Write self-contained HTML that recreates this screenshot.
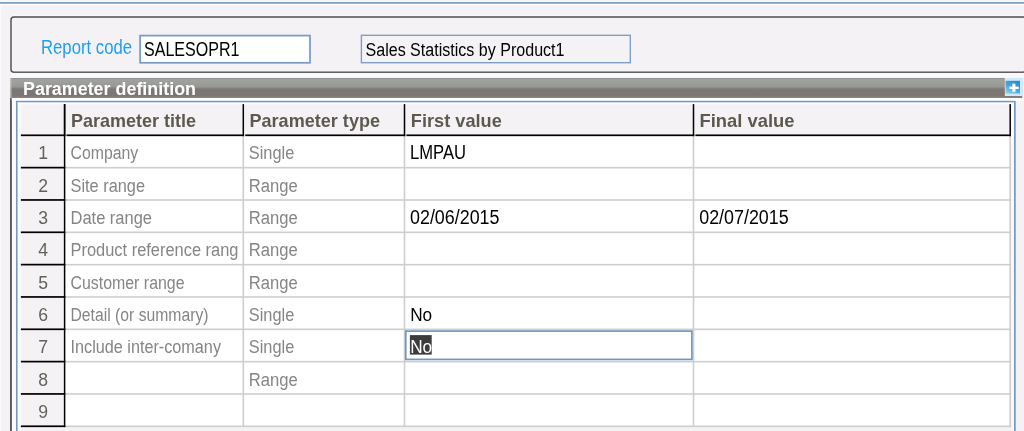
<!DOCTYPE html>
<html><head><meta charset="utf-8"><title>Parameter definition</title>
<style>
html,body{margin:0;padding:0;background:#f5f2f6;}
body{position:relative;width:1024px;height:431px;overflow:hidden;font-family:"Liberation Sans",sans-serif;}
svg{display:block;position:absolute;left:-4px;top:-4px;font-family:"Liberation Sans",sans-serif;will-change:transform;filter:blur(0.4px);}
</style></head><body>
<svg width="1032" height="439" viewBox="-4 -4 1032 439">
<rect x="-4" y="-4" width="1032" height="439" fill="#f5f2f6"/>
<rect x="-4" y="-4" width="1032" height="6" fill="#f8f6fa"/>
<rect x="-4" y="2" width="1032" height="1.9" fill="#82a3c6"/>
<rect x="-4" y="3.9" width="1032" height="1.3" fill="#ffffff"/>
<rect x="-4" y="4" width="5" height="431" fill="#fbfafc"/>
<rect x="11" y="17" width="1015" height="55.3" rx="3" ry="3" fill="none" stroke="#505050" stroke-width="1.45"/>
<rect x="13" y="14.6" width="1015" height="1.4" fill="#faf8fb"/>
<rect x="11" y="72.9" width="1013" height="4.6" fill="#f9f8fa"/>
<text x="41.0" y="54.1" font-size="19.4" fill="#1c9ff0" textLength="91" lengthAdjust="spacingAndGlyphs">Report code</text>
<rect x="140.1" y="35.6" width="169.9" height="27.2" fill="#ffffff" stroke="#7a9cc4" stroke-width="1.75"/>
<text x="144.0" y="56.1" font-size="19.7" fill="#000" textLength="95.5" lengthAdjust="spacingAndGlyphs">SALESOPR1</text>
<rect x="361.4" y="35.3" width="268.9" height="27.4" fill="#f5f2f6" stroke="#7a9cc4" stroke-width="1.35"/>
<text x="365.5" y="56.0" font-size="19.2" fill="#000" textLength="199" lengthAdjust="spacingAndGlyphs">Sales Statistics by Product1</text>
<defs>
<linearGradient id="bar" x1="0" y1="0" x2="0" y2="1">
<stop offset="0" stop-color="#8b8d8a"/>
<stop offset="0.08" stop-color="#a0a29e"/>
<stop offset="0.42" stop-color="#989995"/>
<stop offset="0.55" stop-color="#7d7876"/>
<stop offset="0.88" stop-color="#7b7573"/>
<stop offset="1" stop-color="#8c8886"/>
</linearGradient>
<linearGradient id="ico" x1="0.8" y1="0" x2="0.2" y2="1">
<stop offset="0" stop-color="#2a88cf"/>
<stop offset="0.55" stop-color="#4ba6dd"/>
<stop offset="1" stop-color="#8dcdec"/>
</linearGradient>
</defs>
<rect x="10.2" y="78" width="1012" height="20.1" fill="url(#bar)"/>
<rect x="10.2" y="78" width="1.3" height="20.1" fill="#c4c4c4" opacity="0.85"/>
<text x="23.0" y="94.5" font-size="18" fill="#ffffff" font-weight="bold" textLength="173" lengthAdjust="spacingAndGlyphs">Parameter definition</text>
<rect x="1004.8" y="78" width="18" height="18" fill="#d2eaf7"/>
<rect x="1005.6" y="80.8" width="14.4" height="12.8" fill="url(#ico)"/>
<rect x="1012.3" y="83.7" width="3.1" height="8.2" fill="#ffffff"/>
<rect x="1009.3" y="86.6" width="9.4" height="2.4" fill="#ffffff"/>
<rect x="11.8" y="98.1" width="1016" height="340" fill="#f5f2f6"/>
<rect x="11.8" y="98.1" width="5" height="340" fill="#faf9fb"/>
<rect x="10.0" y="98.1" width="1.9" height="340" fill="#585858"/>
<rect x="11.8" y="98.1" width="1016" height="2.8" fill="#ffffff"/>
<rect x="16.9" y="101.7" width="997.9" height="340" fill="#f5f2f6" stroke="#7199c3" stroke-width="1.8"/>
<rect x="17.7" y="102.5" width="3.1" height="330" fill="#fbfafc"/>
<rect x="17.7" y="102.5" width="996.3" height="1.8" fill="#fdfcfe"/>
<rect x="1011" y="104" width="3" height="335" fill="#fbfafc"/>
<rect x="65" y="136" width="945" height="290.27" fill="#ffffff"/>
<rect x="65.4" y="166.88" width="945.8" height="1.6" fill="#cfcdd0"/>
<rect x="65.4" y="199.21" width="945.8" height="1.6" fill="#cfcdd0"/>
<rect x="65.4" y="231.54" width="945.8" height="1.6" fill="#cfcdd0"/>
<rect x="65.4" y="263.87" width="945.8" height="1.6" fill="#cfcdd0"/>
<rect x="65.4" y="296.20" width="945.8" height="1.6" fill="#cfcdd0"/>
<rect x="65.4" y="328.53" width="945.8" height="1.6" fill="#cfcdd0"/>
<rect x="65.4" y="360.86" width="945.8" height="1.6" fill="#cfcdd0"/>
<rect x="65.4" y="393.19" width="945.8" height="1.6" fill="#cfcdd0"/>
<rect x="65.4" y="425.52" width="945.8" height="1.6" fill="#cfcdd0"/>
<rect x="242.50" y="136" width="1.6" height="291.07" fill="#cfcdd0"/>
<rect x="403.70" y="136" width="1.6" height="291.07" fill="#cfcdd0"/>
<rect x="692.70" y="136" width="1.6" height="291.07" fill="#cfcdd0"/>
<rect x="1009.40" y="136" width="1.6" height="291.07" fill="#cfcdd0"/>
<rect x="20.90" y="134.45" width="44.45" height="1.7" fill="#000000"/>
<rect x="63.85" y="104.1" width="1.5" height="32.05" fill="#000000"/>
<rect x="66.50" y="134.45" width="177.55" height="1.7" fill="#000000"/>
<rect x="242.55" y="104.1" width="1.5" height="32.05" fill="#000000"/>
<rect x="245.20" y="134.45" width="160.05" height="1.7" fill="#000000"/>
<rect x="403.75" y="104.1" width="1.5" height="32.05" fill="#000000"/>
<rect x="406.40" y="134.45" width="287.85" height="1.7" fill="#000000"/>
<rect x="692.75" y="104.1" width="1.5" height="32.05" fill="#000000"/>
<rect x="695.40" y="134.45" width="315.55" height="1.7" fill="#000000"/>
<rect x="1009.45" y="104.1" width="1.5" height="32.05" fill="#000000"/>
<rect x="63.85" y="104.1" width="1.5" height="323.02" fill="#000000"/>
<rect x="20.9" y="166.78" width="44.45" height="1.7" fill="#000000"/>
<rect x="20.9" y="199.11" width="44.45" height="1.7" fill="#000000"/>
<rect x="20.9" y="231.44" width="44.45" height="1.7" fill="#000000"/>
<rect x="20.9" y="263.77" width="44.45" height="1.7" fill="#000000"/>
<rect x="20.9" y="296.10" width="44.45" height="1.7" fill="#000000"/>
<rect x="20.9" y="328.43" width="44.45" height="1.7" fill="#000000"/>
<rect x="20.9" y="360.76" width="44.45" height="1.7" fill="#000000"/>
<rect x="20.9" y="393.09" width="44.45" height="1.7" fill="#000000"/>
<rect x="20.9" y="425.42" width="44.45" height="1.7" fill="#000000"/>
<text x="71.0" y="126.6" font-size="19" fill="#5d594f" font-weight="bold" textLength="125" lengthAdjust="spacingAndGlyphs">Parameter title</text>
<text x="249.5" y="126.6" font-size="19" fill="#5d594f" font-weight="bold" textLength="130.5" lengthAdjust="spacingAndGlyphs">Parameter type</text>
<text x="410.8" y="126.6" font-size="19" fill="#5d594f" font-weight="bold" textLength="91" lengthAdjust="spacingAndGlyphs">First value</text>
<text x="699.5" y="126.6" font-size="19" fill="#5d594f" font-weight="bold" textLength="95" lengthAdjust="spacingAndGlyphs">Final value</text>
<text x="43.1" y="159.3" font-size="17.6" fill="#64605c" text-anchor="middle">1</text>
<text x="70.5" y="159.3" font-size="19.2" fill="#858585" textLength="67.8" lengthAdjust="spacingAndGlyphs">Company</text>
<text x="248.8" y="159.3" font-size="19.2" fill="#858585" textLength="45.5" lengthAdjust="spacingAndGlyphs">Single</text>
<text x="43.1" y="191.63" font-size="17.6" fill="#64605c" text-anchor="middle">2</text>
<text x="70.5" y="191.63" font-size="19.2" fill="#858585" textLength="74.5" lengthAdjust="spacingAndGlyphs">Site range</text>
<text x="248.8" y="191.63" font-size="19.2" fill="#858585" textLength="49" lengthAdjust="spacingAndGlyphs">Range</text>
<text x="43.1" y="223.96" font-size="17.6" fill="#64605c" text-anchor="middle">3</text>
<text x="70.5" y="223.96" font-size="19.2" fill="#858585" textLength="81.5" lengthAdjust="spacingAndGlyphs">Date range</text>
<text x="248.8" y="223.96" font-size="19.2" fill="#858585" textLength="49" lengthAdjust="spacingAndGlyphs">Range</text>
<text x="43.1" y="256.29" font-size="17.6" fill="#64605c" text-anchor="middle">4</text>
<text x="70.5" y="256.29" font-size="19.2" fill="#858585" textLength="168" lengthAdjust="spacingAndGlyphs">Product reference rang</text>
<text x="248.8" y="256.29" font-size="19.2" fill="#858585" textLength="49" lengthAdjust="spacingAndGlyphs">Range</text>
<text x="43.1" y="288.62" font-size="17.6" fill="#64605c" text-anchor="middle">5</text>
<text x="70.5" y="288.62" font-size="19.2" fill="#858585" textLength="114" lengthAdjust="spacingAndGlyphs">Customer range</text>
<text x="248.8" y="288.62" font-size="19.2" fill="#858585" textLength="49" lengthAdjust="spacingAndGlyphs">Range</text>
<text x="43.1" y="320.95" font-size="17.6" fill="#64605c" text-anchor="middle">6</text>
<text x="70.5" y="320.95" font-size="19.2" fill="#858585" textLength="138" lengthAdjust="spacingAndGlyphs">Detail (or summary)</text>
<text x="248.8" y="320.95" font-size="19.2" fill="#858585" textLength="45.5" lengthAdjust="spacingAndGlyphs">Single</text>
<text x="43.1" y="353.28" font-size="17.6" fill="#64605c" text-anchor="middle">7</text>
<text x="70.5" y="353.28" font-size="19.2" fill="#858585" textLength="150.5" lengthAdjust="spacingAndGlyphs">Include inter-comany</text>
<text x="248.8" y="353.28" font-size="19.2" fill="#858585" textLength="45.5" lengthAdjust="spacingAndGlyphs">Single</text>
<text x="43.1" y="385.61" font-size="17.6" fill="#64605c" text-anchor="middle">8</text>
<text x="248.8" y="385.61" font-size="19.2" fill="#858585" textLength="49" lengthAdjust="spacingAndGlyphs">Range</text>
<text x="43.1" y="417.94" font-size="17.6" fill="#64605c" text-anchor="middle">9</text>
<text x="410.0" y="159.3" font-size="19.7" fill="#000" textLength="56" lengthAdjust="spacingAndGlyphs">LMPAU</text>
<text x="410.0" y="223.96" font-size="19.7" fill="#000" textLength="89.5" lengthAdjust="spacingAndGlyphs">02/06/2015</text>
<text x="699.2" y="223.96" font-size="19.7" fill="#000" textLength="89.5" lengthAdjust="spacingAndGlyphs">02/07/2015</text>
<text x="410.2" y="320.95" font-size="19.2" fill="#000" textLength="22" lengthAdjust="spacingAndGlyphs">No</text>
<rect x="405.8" y="331.1" width="286.1" height="28.3" fill="#ffffff" stroke="#7098c4" stroke-width="1.7"/>
<rect x="409.9" y="335.1" width="21.8" height="19.5" fill="#3c3c3c"/>
<text x="410.2" y="353.28" font-size="19.2" fill="#ffffff" textLength="22" lengthAdjust="spacingAndGlyphs">No</text>
</svg>
</body></html>
